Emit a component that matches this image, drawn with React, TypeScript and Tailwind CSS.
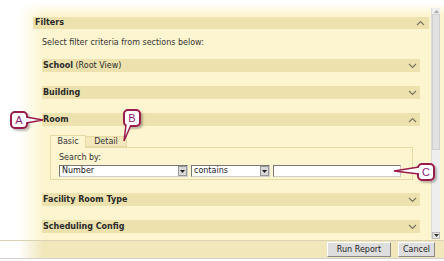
import type { ReactNode } from 'react';

function Chevron({ up }: { up?: boolean }) {
  return (
    <svg width="9" height="6" viewBox="0 0 9 6" className="shrink-0">
      <path
        d={up ? 'M1 5 L4.5 1.5 L8 5' : 'M1 1 L4.5 4.5 L8 1'}
        fill="none"
        stroke="#7a7563"
        strokeWidth="1.2"
      />
    </svg>
  );
}

function SectionBar({ children, up }: { children: ReactNode; up?: boolean }) {
  return (
    <div className="ml-[9px] w-[378px] h-[13px] flex items-center justify-between pl-[1px] pr-[3px] bg-[#ede2ae]">
      <div className="text-[8px] text-[#2a2a2a] leading-none">{children}</div>
      <Chevron up={up} />
    </div>
  );
}

function Select({ value, w }: { value: string; w: string }) {
  return (
    <div className={`${w} h-[12px] flex items-center bg-white border border-t-[#777] border-l-[#777] border-r-[#ccc] border-b-[#ccc]`}>
      <span className="flex-1 pl-[2px] text-[8px] leading-none text-[#222]">{value}</span>
      <span className="w-[9px] h-[10px] grid place-items-center bg-[#d8d8d8] border border-[#999]">
        <svg width="5" height="3" viewBox="0 0 5 3">
          <path d="M0 0 H5 L2.5 3 Z" fill="#222" />
        </svg>
      </span>
    </div>
  );
}

function Callout({ letter, className, tail }: { letter: string; className: string; tail: ReactNode }) {
  return (
    <div className={`absolute ${className}`}>
      <div className="relative w-[18px] h-[18px] rounded-[5px] border-2 border-[#9a1c4d] bg-white grid place-items-center shadow-[2px_2px_2px_rgba(0,0,0,0.25)]">
        <span className="text-[11px] leading-none text-[#8c1c6e] font-['Liberation_Sans',sans-serif]">{letter}</span>
      </div>
      {tail}
    </div>
  );
}

export default function App() {
  return (
    <div className="relative w-[444px] h-[261px] overflow-hidden bg-white font-['DejaVu_Sans',sans-serif]">
      <div className="h-[240px] flex bg-[#fdf5cf] bg-[linear-gradient(to_right,#ffffff_18px,rgba(255,255,255,0)_44px),linear-gradient(to_bottom,#ffffff_3px,rgba(255,255,255,0)_15px)]">
        <div className="w-[431px] pl-[33px] pt-[17px] flex flex-col">
          {/* Filters header */}
          <div className="w-[396px] h-[12px] flex items-center justify-between pl-[2px] pr-[4px] bg-[#ede2ae]">
            <span className="text-[8px] font-bold leading-none text-[#2a2a2a]">Filters</span>
            <Chevron up />
          </div>
          <div className="ml-[9px] mt-[10px] h-[8px] text-[8px] leading-none text-[#333]">
            Select filter criteria from sections below:
          </div>

          <div className="mt-[12px] flex flex-col gap-[14px]">
            <SectionBar>
              <b>School</b> <span>(Root View)</span>
            </SectionBar>
            <SectionBar>
              <b>Building</b>
            </SectionBar>
            <SectionBar up>
              <b>Room</b>
            </SectionBar>
          </div>

          {/* Tabs */}
          <div className="ml-[17px] mt-[8px] w-[363px] flex flex-col">
            <div className="flex items-end h-[13px]">
              <div className="w-[36px] h-[13px] border border-b-0 border-[#e6d9a6] bg-[#fdf5cf] flex items-center justify-center text-[8px] leading-none text-[#333] relative top-[1px]">
                Basic
              </div>
              <div className="w-[41px] h-[11px] border border-l-0 border-[#e6d9a6] bg-[#f3e8bb] flex items-center justify-center text-[8px] leading-none text-[#333]">
                Detail
              </div>
            </div>
            <div className="h-[33px] border border-[#e6d9a6] pl-[8px] pt-[6px]">
              <div className="text-[8px] leading-none text-[#333]">Search by:</div>
              <div className="mt-[3px] flex gap-[3px]">
                <Select value="Number" w="w-[129px]" />
                <Select value="contains" w="w-[79px]" />
                <div className="w-[128px] h-[12px] bg-white border border-t-[#777] border-l-[#777] border-r-[#ccc] border-b-[#ccc]" />
              </div>
            </div>
          </div>

          <div className="mt-[13px] flex flex-col gap-[14px]">
            <SectionBar>
              <b>Facility Room Type</b>
            </SectionBar>
            <SectionBar>
              <b>Scheduling Config</b>
            </SectionBar>
          </div>
        </div>

        {/* Scrollbar */}
        <div className="mt-[8px] w-[9px] h-[231px] flex flex-col bg-[#eeeeee] border-l border-[#dcdcdc]">
          <div className="h-[6px] grid place-items-center">
            <svg width="5" height="3" viewBox="0 0 5 3">
              <path d="M0 3 H5 L2.5 0 Z" fill="#aaa" />
            </svg>
          </div>
          <div className="h-[136px] bg-[#e2e2e2] border border-[#cfcfcf]" />
          <div className="flex-1" />
          <div className="h-[7px] grid place-items-center bg-[#e6e6e6] border border-[#bbb]">
            <svg width="5" height="3" viewBox="0 0 5 3">
              <path d="M0 0 H5 L2.5 3 Z" fill="#333" />
            </svg>
          </div>
        </div>
      </div>

      {/* Bottom bar */}
      <div className="h-[19px] flex items-center justify-end gap-[7px] pr-[9px] border-t border-[#d9d2b4] border-b border-b-[#d0d0d0] bg-[#f1e7ba] bg-[linear-gradient(to_right,#ffffff_18px,rgba(255,255,255,0)_44px)]">
        <button className="w-[64px] h-[15px] bg-[#dedede] border border-t-[#fff] border-l-[#fff] border-r-[#888] border-b-[#888] text-[8px] leading-none text-[#222]">
          Run Report
        </button>
        <button className="w-[37px] h-[15px] bg-[#dedede] border border-t-[#fff] border-l-[#fff] border-r-[#888] border-b-[#888] text-[8px] leading-none text-[#222]">
          Cancel
        </button>
      </div>

      {/* Callouts */}
      <Callout
        letter="A"
        className="left-[10px] top-[111px]"
        tail={
          <svg className="absolute left-[16px] top-[4px]" width="18" height="10" viewBox="0 0 18 10">
            <path d="M0 2 L17 5 L0 8" fill="white" stroke="#9a1c4d" strokeWidth="1.5" />
          </svg>
        }
      />
      <Callout
        letter="B"
        className="left-[123px] top-[109px]"
        tail={
          <svg className="absolute left-[0px] top-[16px]" width="10" height="17" viewBox="0 0 10 17">
            <path d="M3 0 L1 16 L8 0" fill="white" stroke="#9a1c4d" strokeWidth="1.5" />
          </svg>
        }
      />
      <Callout
        letter="C"
        className="left-[417px] top-[163px]"
        tail={
          <svg className="absolute left-[-24px] top-[3px]" width="26" height="10" viewBox="0 0 26 10">
            <path d="M26 1 L1 5 L26 8" fill="white" stroke="#9a1c4d" strokeWidth="1.5" />
          </svg>
        }
      />
    </div>
  );
}
